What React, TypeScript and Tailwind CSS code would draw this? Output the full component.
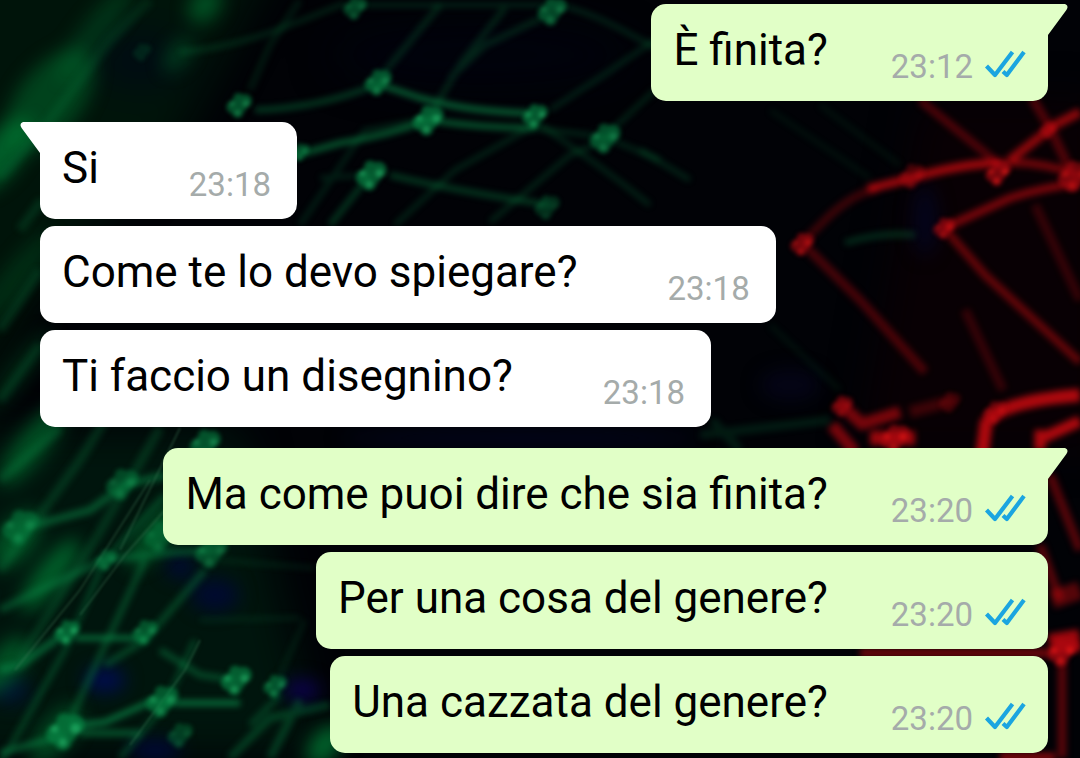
import clsx from "clsx";

type Message = {
  id: number;
  text: string;
  time: string;
  sent: boolean;
};

const GROUPS: Message[][] = [
  [{ id: 1, text: "È finita?", time: "23:12", sent: true }],
  [
    { id: 2, text: "Si", time: "23:18", sent: false },
    { id: 3, text: "Come te lo devo spiegare?", time: "23:18", sent: false },
    { id: 4, text: "Ti faccio un disegnino?", time: "23:18", sent: false },
  ],
  [
    { id: 5, text: "Ma come puoi dire che sia finita?", time: "23:20", sent: true },
    { id: 6, text: "Per una cosa del genere?", time: "23:20", sent: true },
    { id: 7, text: "Una cazzata del genere?", time: "23:20", sent: true },
  ],
];

export default function App() {
  return (
    <main className="relative isolate min-h-screen overflow-hidden bg-[#010206] pt-1 pr-8 pb-1 pl-10 font-['Roboto',sans-serif]">
      <Wallpaper />
      <div className="flex flex-col gap-[21px]">
        {GROUPS.map((group) => (
          <ul key={group[0].id} className="flex flex-col gap-[7px]">
            {group.map((message, index) => (
              <Bubble key={message.id} message={message} first={index === 0} />
            ))}
          </ul>
        ))}
      </div>
    </main>
  );
}

function Bubble({ message, first }: { message: Message; first: boolean }) {
  const { text, time, sent } = message;

  return (
    <li
      className={clsx(
        "relative flex h-[97px] max-w-full rounded-[15px]",
        sent
          ? "gap-[63px] self-end bg-[#e1ffc7] px-[22px]"
          : "gap-[90px] self-start bg-white pr-[26px] pl-[22px]",
        first && (sent ? "rounded-tr-none" : "rounded-tl-none"),
      )}
    >
      {first ? <Tail sent={sent} /> : null}
      <p className="pt-5 text-[44px] leading-[52px] whitespace-nowrap text-black">
        {text}
      </p>
      <div className="flex items-center gap-[11px] self-end pb-[14px]">
        <time className="text-[33px] leading-10 text-[#a5abaa]">{time}</time>
        {sent ? <ReadTicks /> : null}
      </div>
    </li>
  );
}

function Tail({ sent }: { sent: boolean }) {
  return (
    <svg
      viewBox="0 0 21 32"
      aria-hidden="true"
      className={clsx(
        "absolute top-0 h-8 w-[21px]",
        sent ? "-right-5 text-[#e1ffc7]" : "-left-5 -scale-x-100 text-white",
      )}
    >
      <path d="M0 0H18Q21 1 20.4 4L19.4 6L1 31V32H0Z" fill="currentColor" />
    </svg>
  );
}

function ReadTicks() {
  return (
    <svg
      viewBox="0 0 42 28"
      role="img"
      aria-label="Read"
      className="mb-1.5 h-7 w-[42px]"
      fill="none"
      stroke="#1ba5e0"
      strokeWidth="4.2"
      strokeLinejoin="round"
    >
      <path d="M2.5 16L11 25L28.5 2" />
      <path d="M19 21.5L22.8 25L40 2" />
    </svg>
  );
}

// Out-of-focus streaks, rotated around their centre
const GREEN_HAZE = [
  { cx: 50, cy: 100, rx: 32, ry: 60, o: 0.45 },
  { cx: 0, cy: 155, rx: 20, ry: 45, o: 0.7 },
  { cx: 95, cy: 32, rx: 14, ry: 60, o: 0.3 },
  { cx: 205, cy: 5, rx: 14, ry: 20, o: 0.6 },
  { cx: 178, cy: 55, rx: 10, ry: 20, o: 0.4 },
  { cx: 32, cy: 445, rx: 15, ry: 50, o: 0.6 },
  { cx: 16, cy: 540, rx: 18, ry: 34, o: 0.6 },
  { cx: 50, cy: 575, rx: 13, ry: 45, o: 0.75 },
  { cx: 5, cy: 665, rx: 16, ry: 34, o: 0.6 },
  { cx: 155, cy: 535, rx: 14, ry: 40, o: 0.6 },
  { cx: 15, cy: 280, rx: 14, ry: 60, o: 0.25 },
  { cx: 20, cy: 370, rx: 12, ry: 50, o: 0.25 },
  { cx: 325, cy: 745, rx: 14, ry: 24, o: 0.8 },
  { cx: 55, cy: 735, rx: 16, ry: 36, o: 0.5 },
];

const GREEN_THREADS = [
  { d: "M0 178L50 120L110 40L150 0", w: 10, o: 0.15 },
  { d: "M180 52C240 48 290 25 340 5H560C600 15 630 35 660 50", w: 5, o: 0.25 },
  { d: "M378 84L420 98Q470 112 532 113", w: 6, o: 0.65 },
  { d: "M255 110Q320 108 378 84", w: 6, o: 0.4 },
  { d: "M297 155L340 143Q390 135 428 120Q480 128 535 128", w: 6, o: 0.6 },
  { d: "M535 128L604 137L660 160", w: 5, o: 0.25 },
  { d: "M378 80L440 5M430 115L462 62L505 8M450 78L485 45L550 14", w: 6, o: 0.25 },
  { d: "M250 90L270 45L300 0", w: 6, o: 0.18 },
  { d: "M550 110L605 74L655 40M604 137L655 90", w: 5, o: 0.25 },
  { d: "M370 175L330 225M390 175Q450 190 550 205", w: 6, o: 0.38 },
  { d: "M395 225L455 170L535 125M490 222L570 155L610 138", w: 5, o: 0.25 },
  { d: "M540 125Q600 165 650 205M640 150L690 180", w: 5, o: 0.25 },
  { d: "M320 178L370 175M300 225L365 130L430 118", w: 5, o: 0.22 },
  { d: "M770 110L870 178M820 105L900 165M770 325L840 390", w: 6, o: 0.1 },
  { d: "M700 435L830 420M712 420L740 450", w: 9, o: 0.18 },
  { d: "M845 243Q880 232 915 235", w: 7, o: 0.28 },
  { d: "M0 480L60 428M0 570L80 460L105 420M20 660L95 540L160 428", w: 9, o: 0.25 },
  { d: "M35 525L90 510L125 485L165 475", w: 8, o: 0.5 },
  { d: "M0 610L50 585L105 560L165 553L215 550", w: 8, o: 0.4 },
  { d: "M0 670L20 665L65 633", w: 8, o: 0.55 },
  { d: "M75 638H145", w: 5, o: 0.75 },
  { d: "M0 765L65 650L105 560L165 495", w: 6, o: 0.35 },
  { d: "M70 720L145 560M105 665L145 640L205 570", w: 7, o: 0.38 },
  { d: "M160 650L200 675L235 680", w: 7, o: 0.4 },
  { d: "M240 703H180L150 702L105 722L70 726", w: 6, o: 0.7 },
  { d: "M65 735L0 753M80 733H140", w: 7, o: 0.5 },
  { d: "M120 758L165 705L195 640M250 725L280 695", w: 6, o: 0.35 },
  { d: "M200 620L300 618M215 560L315 568M280 675L305 620", w: 4, o: 0.18 },
  { d: "M270 758L300 700M230 758L270 718L330 705", w: 8, o: 0.35 },
  { d: "M0 330L40 270M0 400L40 345M20 230L42 200", w: 9, o: 0.22 },
];

// Hairlines crossing the lower left corner
const GREEN_HAIRS = [
  "M120 550L180 428",
  "M15 670L80 590L150 480",
  "M80 615L125 555L165 510",
  "M130 745L185 670L200 640",
];

const RED_THREADS = [
  { d: "M802 243L825 220Q850 195 878 188", w: 8, o: 0.28 },
  { d: "M868 189L912 178Q960 164 998 163", w: 9, o: 0.7 },
  { d: "M998 163Q1040 160 1080 176", w: 8, o: 0.5 },
  { d: "M1010 160L1055 125L1080 112", w: 9, o: 0.65 },
  { d: "M920 100L1000 165", w: 8, o: 0.35 },
  { d: "M944 228L1010 198Q1040 188 1080 183", w: 8, o: 0.55 },
  { d: "M802 243L860 300L925 372", w: 9, o: 0.33 },
  { d: "M944 228L985 275L1080 362", w: 8, o: 0.45 },
  { d: "M965 310L1003 390M1035 205L1080 300", w: 9, o: 0.22 },
  { d: "M1032 98L1050 128L1070 170", w: 9, o: 0.35 },
  { d: "M982 455L986 424Q996 402 1080 395", w: 13, o: 0.8 },
  { d: "M1038 440L1080 421M1040 430V450", w: 11, o: 0.8 },
  { d: "M838 402L862 424L900 412M832 425L855 452", w: 12, o: 0.55 },
  { d: "M870 438H915", w: 14, o: 0.7 },
  { d: "M910 412L955 400", w: 12, o: 0.25 },
  { d: "M1050 475L1080 550M1040 545L1060 600M1062 655V758", w: 9, o: 0.4 },
  { d: "M860 653H1050", w: 9, o: 0.5 },
  { d: "M1050 645L1080 640", w: 22, o: 0.75 },
  { d: "M1052 600L1080 590", w: 18, o: 0.4 },
  { d: "M1000 757H1055", w: 8, o: 0.6 },
];

// x, y, radius, opacity
const GREEN_NODES = [
  [355, 8, 13, 0.7], [552, 11, 16, 0.8], [378, 82, 15, 0.9], [428, 120, 17, 1],
  [371, 175, 17, 1], [535, 116, 14, 1], [605, 138, 17, 0.85], [547, 207, 14, 0.5],
  [142, 52, 10, 0.3], [239, 105, 14, 0.9], [300, 152, 10, 0.8], [205, 444, 17, 0.9],
  [122, 484, 18, 0.7], [20, 527, 20, 0.75], [160, 536, 18, 0.6], [211, 552, 18, 0.75],
  [106, 560, 12, 0.75], [67, 632, 14, 1.2], [145, 632, 14, 0.85], [236, 680, 17, 1],
  [162, 701, 18, 0.9], [275, 686, 13, 0.9], [65, 731, 21, 1], [180, 735, 14, 0.6],
];

const RED_NODES = [
  [802, 244, 13, 0.9], [912, 176, 14, 0.6], [998, 173, 14, 1.1], [944, 228, 12, 0.9],
  [1074, 176, 18, 0.85], [842, 406, 12, 0.7], [895, 438, 16, 0.9], [950, 402, 12, 0.35],
  [995, 412, 13, 0.7], [1048, 130, 9, 0.7], [1062, 652, 16, 1],
];

function Wallpaper() {
  return (
    <svg
      viewBox="0 0 1080 758"
      preserveAspectRatio="xMidYMid slice"
      aria-hidden="true"
      className="absolute inset-0 -z-10 h-full w-full"
    >
      <defs>
        <filter id="deep" x="-100" y="-100" width="1280" height="958" filterUnits="userSpaceOnUse" colorInterpolationFilters="sRGB">
          <feGaussianBlur stdDeviation="20" />
        </filter>
        <filter id="haze" x="-100" y="-100" width="1280" height="958" filterUnits="userSpaceOnUse" colorInterpolationFilters="sRGB">
          <feGaussianBlur stdDeviation="9" />
        </filter>
        <filter id="soft" x="-20" y="-20" width="1120" height="798" filterUnits="userSpaceOnUse" colorInterpolationFilters="sRGB">
          <feGaussianBlur stdDeviation="3" />
        </filter>
        <filter id="node" x="-20" y="-20" width="1120" height="798" filterUnits="userSpaceOnUse" colorInterpolationFilters="sRGB">
          <feGaussianBlur stdDeviation="2" />
        </filter>
        <filter id="hair" x="-20" y="-20" width="1120" height="798" filterUnits="userSpaceOnUse" colorInterpolationFilters="sRGB">
          <feGaussianBlur stdDeviation="1" />
        </filter>
      </defs>

      <g filter="url(#deep)">
        <path d="M-50 -50H280L180 140L60 260L-50 440Z" fill="#00140a" />
        <path d="M-50 430H240L320 758H-50Z" fill="#00150d" />
        <path d="M920 100H1100V450H860Z" fill="#080004" />
        <ellipse cx="480" cy="55" rx="150" ry="30" fill="#00020c" />
        <ellipse cx="140" cy="60" rx="50" ry="24" fill="#000a14" />
      </g>

      <g filter="url(#haze)">
        <ellipse cx="105" cy="680" rx="20" ry="12" fill="#000c50" />
        <ellipse cx="215" cy="595" rx="24" ry="16" fill="#000a30" />
        <ellipse cx="180" cy="567" rx="14" ry="10" fill="#000838" />
        <ellipse cx="302" cy="690" rx="18" ry="10" fill="#0c0050" />
        <ellipse cx="155" cy="750" rx="26" ry="10" fill="#000838" />
        <ellipse cx="10" cy="690" rx="20" ry="14" fill="#001430" />
        <ellipse cx="925" cy="220" rx="12" ry="36" fill="#04041c" />
        <ellipse cx="790" cy="385" rx="30" ry="16" fill="#040416" />
        <ellipse cx="520" cy="438" rx="180" ry="8" fill="#02051c" />
      </g>

      <g filter="url(#haze)" fill="#007a34">
        {GREEN_HAZE.map(({ cx, cy, rx, ry, o }) => (
          <ellipse
            key={`${cx}-${cy}`}
            cx={cx}
            cy={cy}
            rx={rx}
            ry={ry}
            opacity={o}
            transform={`rotate(38 ${cx} ${cy})`}
          />
        ))}
      </g>

      <g filter="url(#soft)" fill="none">
        {GREEN_THREADS.map(({ d, w, o }) => (
          <path key={d} d={d} stroke="#0a8a48" strokeWidth={w} opacity={o} />
        ))}
        {RED_THREADS.map(({ d, w, o }) => (
          <path key={d} d={d} stroke="#d40a10" strokeWidth={w} opacity={o} />
        ))}
      </g>

      <g filter="url(#hair)" fill="none" stroke="#3f7a58" strokeWidth="2" opacity="0.35">
        {GREEN_HAIRS.map((d) => (
          <path key={d} d={d} />
        ))}
      </g>

      <g filter="url(#node)">
        {GREEN_NODES.map(([x, y, r, o]) => (
          <Node key={`${x}-${y}`} x={x} y={y} r={r} o={o} fill="#078544" glow="#2cc474" />
        ))}
        {RED_NODES.map(([x, y, r, o]) => (
          <Node key={`${x}-${y}`} x={x} y={y} r={r} o={o} fill="#b00a12" glow="#ff1f1a" />
        ))}
      </g>
    </svg>
  );
}

type NodeProps = {
  x: number;
  y: number;
  r: number;
  o: number;
  fill: string;
  glow: string;
};

// A knot is a small clump of overlapping blobs with a few highlights
function Node({ x, y, r, o, fill, glow }: NodeProps) {
  return (
    <g opacity={Math.min(o, 1)}>
      <g fill={fill} opacity="0.65">
        <circle cx={x} cy={y} r={r * 0.6} />
        <circle cx={x - r * 0.45} cy={y + r * 0.15} r={r * 0.45} />
        <circle cx={x + r * 0.45} cy={y - r * 0.3} r={r * 0.48} />
        <circle cx={x - r * 0.1} cy={y + r * 0.5} r={r * 0.42} />
        <circle cx={x - r * 0.05} cy={y - r * 0.5} r={r * 0.35} />
      </g>
      <g fill={glow} opacity={o * 0.5}>
        <circle cx={x + r * 0.5} cy={y - r * 0.1} r={r * 0.24} />
        <circle cx={x - r * 0.5} cy={y - r * 0.1} r={r * 0.18} />
        <circle cx={x - r * 0.1} cy={y + r * 0.55} r={r * 0.2} />
      </g>
    </g>
  );
}
